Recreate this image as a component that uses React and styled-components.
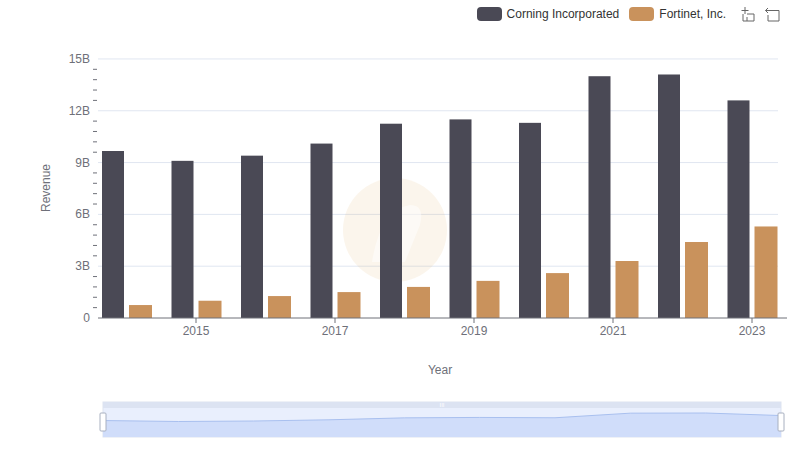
import React from "react";
import styled, { createGlobalStyle } from "styled-components";

const Global = createGlobalStyle`
  body { margin: 0; background: #fff; font-family: "Liberation Sans", Arial, sans-serif; }
`;

const Page = styled.div`
  width: 800px; height: 461px; position: relative; overflow: hidden;
  display: flex; flex-direction: column;
`;
const Legend = styled.div`
  display: flex; justify-content: flex-end; align-items: center; gap: 10px;
  padding: 4px 20px 0 0; height: 20px; font-size: 12px; color: #333;
`;
const Item = styled.div`display: flex; align-items: center; gap: 5px;`;
const Swatch = styled.span`
  width: 25px; height: 14px; border-radius: 4px; background: ${p => p.c};
`;
const Tools = styled.div`display: flex; gap: 8px; margin-left: 4px;`;
const Chart = styled.svg`display: block; position: absolute; left: 0; top: 0;`;

const years = [2014,2015,2016,2017,2018,2019,2020,2021,2022,2023];
const corning = [9.67,9.1,9.4,10.1,11.25,11.5,11.3,14.0,14.1,12.6];
const fortinet = [0.75,1.0,1.27,1.5,1.8,2.15,2.6,3.3,4.4,5.3];
const y0 = 318, k = 17.27;
const cx = i => 126.5 + i * 69.5;

export default function App() {
  const minor = [];
  for (let v = 0; v <= 15.0001; v += 0.6) minor.push(v);
  const zx = i => 103 + i * (678 / 9);
  const zy = v => 437 - (v / 14.1) * 24;
  const pts = corning.map((v, i) => `${zx(i)},${zy(v)}`);
  return (
    <Page>
      <Global />
      <Chart width="800" height="461">
        {[0,3,6,9,12,15].map(v => (
          <g key={v}>
            {v > 0 && <line x1="98" x2="778" y1={y0 - v*k} y2={y0 - v*k} stroke="#e0e6f1" />}
            <text x="90" y={y0 - v*k + 4} textAnchor="end" fontSize="12" fill="#6e7079">{v === 0 ? "0" : v + "B"}</text>
          </g>
        ))}
        {minor.map((v, i) => i % 5 !== 0 && (
          <line key={i} x1="93" x2="97" y1={y0 - v*k} y2={y0 - v*k} stroke="#6e7079" />
        ))}
        <g opacity="0.12" fill="#e0b060">
          <circle cx="395" cy="230" r="52" />
        </g>
        <path d="M372 262 Q380 210 410 205 Q425 205 420 225 L405 262 Z" fill="#fff" opacity="0.5" />
        {years.map((y, i) => (
          <g key={y}>
            <rect x={cx(i) - 24.5} width="22" y={y0 - corning[i]*k} height={corning[i]*k} fill="#4a4955" />
            <rect x={cx(i) + 2.5} width="23" y={y0 - fortinet[i]*k} height={fortinet[i]*k} fill="#c9925c" />
            {i % 2 === 1 && (
              <>
                <line x1={cx(i)} x2={cx(i)} y1={y0} y2={y0 + 5} stroke="#6e7079" />
                <text x={cx(i)} y={y0 + 17} textAnchor="middle" fontSize="12" fill="#6e7079">{y}</text>
              </>
            )}
          </g>
        ))}
        <line x1="98" x2="787" y1={y0} y2={y0} stroke="#6e7079" />
        <text x="440" y="374" textAnchor="middle" fontSize="12" fill="#6e7079">Year</text>
        <text transform="translate(50,188) rotate(-90)" textAnchor="middle" fontSize="12" fill="#6e7079">Revenue</text>

        <rect x="103" y="402" width="678" height="35" fill="#e9effd" stroke="#dde3f0" />
        <rect x="103" y="402" width="678" height="6" fill="#dce3f2" />
        <text x="442" y="407" textAnchor="middle" fontSize="6" fill="#fff">III</text>
        <polygon points={`103,437 ${pts.join(" ")} 781,437`} fill="#d0ddfa" />
        <polyline points={pts.join(" ")} fill="none" stroke="#a9c0ef" />
        <rect x="100" y="413" width="6" height="18" rx="1" fill="#fff" stroke="#a8b0c0" />
        <rect x="778" y="413" width="6" height="18" rx="1" fill="#fff" stroke="#a8b0c0" />
      </Chart>
      <Legend style={{ position: "relative" }}>
        <Item><Swatch c="#4a4955" />Corning Incorporated</Item>
        <Item><Swatch c="#c9925c" />Fortinet, Inc.</Item>
        <Tools>
          <svg width="16" height="16" viewBox="0 0 16 16" fill="none" stroke="#666">
            <path d="M5 1v7M1.5 4.5h7M7 8h7v7H7V11M3 8v7h4" />
          </svg>
          <svg width="16" height="16" viewBox="0 0 16 16" fill="none" stroke="#666">
            <path d="M4 2L1.5 4.5 4 7M1.5 4.5H15v10.5H4V9" />
          </svg>
        </Tools>
      </Legend>
    </Page>
  );
}
